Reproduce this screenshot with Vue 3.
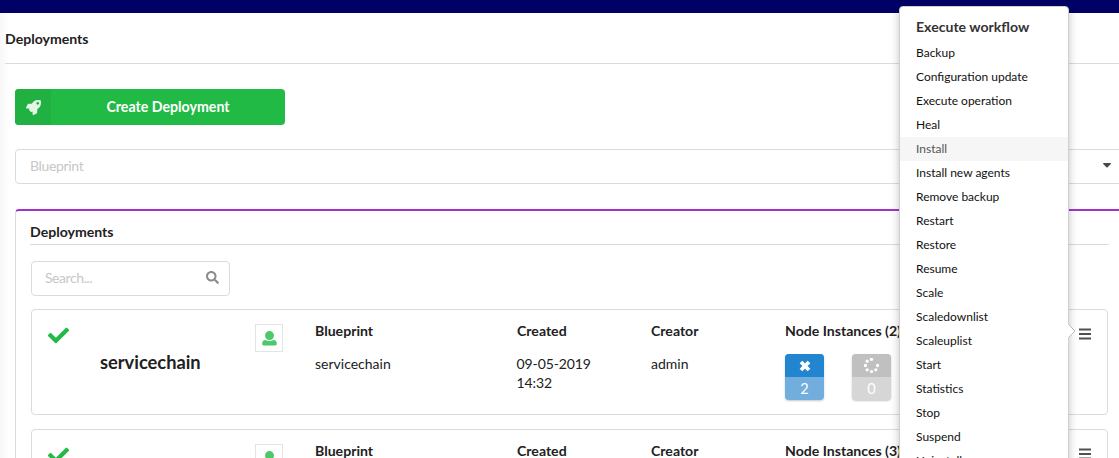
<script setup>
const workflows = [
  'Backup', 'Configuration update', 'Execute operation', 'Heal', 'Install', 'Install new agents',
  'Remove backup', 'Restart', 'Restore', 'Resume', 'Scale', 'Scaledownlist', 'Scaleuplist',
  'Start', 'Statistics', 'Stop', 'Suspend', 'Uninstall',
]
const deployments = [
  { id: 'servicechain', created: '09-05-2019 14:32', creator: 'admin', nodes: 2, counts: true },
  { id: '', created: '', creator: '', nodes: 3, counts: false },
]
const dots = [[256, 48], [256, 464], [464, 256], [48, 256], [109, 403], [403, 403], [109, 109]]
</script>

<template>
  <div class="page">
    <header class="navbar"></header>
    <main class="content">
      <h3 class="page-title">Deployments</h3>
      <button class="create">
        <span class="create-icon">
          <svg viewBox="0 0 512 512" width="15" height="15"><path fill="currentColor" d="M505.1 19.1C503.8 13 499 8.2 492.9 6.9 460.7 0 435.5 0 410.4 0 307.2 0 245.3 55.2 199.1 128H94.9c-18.2 0-34.8 10.3-42.9 26.5L2.6 253.3c-8 16 3.6 34.7 21.5 34.7h95.1c-5.9 12.8-11.9 25.5-18 37.7-3.1 6.2-1.9 13.6 3 18.5l63.6 63.6c4.9 4.9 12.3 6.1 18.5 3 12.2-6.1 24.9-12 37.7-17.9V488c0 17.8 18.8 29.4 34.7 21.5l98.7-49.4c16.3-8.1 26.5-24.8 26.5-42.9V312.8c72.6-46.3 128-108.4 128-211.1.1-25.2.1-50.4-6.8-82.6zM400 160c-26.5 0-48-21.5-48-48s21.5-48 48-48 48 21.5 48 48-21.5 48-48 48z" /></svg>
        </span>
        <span class="create-label">Create Deployment</span>
      </button>
      <div class="select">
        <span>Blueprint</span>
        <svg class="caret" viewBox="0 0 8 5" width="8" height="5"><path d="M.6 0h6.8q.8.2.4.9L4.6 4.2q-.6.5-1.2 0L.2.9Q-.2.2.6 0z" fill="#484848" /></svg>
      </div>
      <section class="segment">
        <h5 class="segment-title">Deployments</h5>
        <div class="search">
          <span>Search...</span>
          <svg viewBox="0 0 512 512" width="13" height="13"><path fill="#8b8b8b" d="M505 442.7L405.3 343c-4.5-4.5-10.6-7-17-7H372c27.6-35.3 44-79.7 44-128C416 93.1 322.9 0 208 0S0 93.1 0 208s93.1 208 208 208c48.3 0 92.7-16.4 128-44v16.3c0 6.4 2.5 12.5 7 17l99.7 99.7c9.4 9.4 24.6 9.4 33.9 0l28.3-28.3c9.4-9.4 9.4-24.6.1-34zM208 336c-70.7 0-128-57.2-128-128 0-70.7 57.2-128 128-128 70.7 0 128 57.2 128 128 0 70.7-57.2 128-128 128z" /></svg>
        </div>
        <article v-for="d in deployments" :key="d.nodes" class="card">
          <div class="identity">
            <div class="marks">
              <svg class="check" viewBox="0 0 512 512" width="21" height="21"><path fill="#21ba45" d="M173.898 439.404l-166.4-166.4c-9.997-9.997-9.997-26.206 0-36.204l36.203-36.204c9.997-9.998 26.207-9.998 36.204 0L192 312.69 432.095 72.596c9.997-9.997 26.207-9.997 36.204 0l36.203 36.204c9.997 9.997 9.997 26.206 0 36.204l-294.4 294.401c-9.998 9.997-26.207 9.997-36.204-.001z" /></svg>
              <span class="owner">
                <svg viewBox="0 0 15 15" width="15" height="15"><circle cx="7.5" cy="4.6" r="4.5" fill="#4dc86a" /><path fill="#4dc86a" d="M3.4 8.9Q7.5 11 11.6 8.9Q14.8 9.3 14.8 12.4V13.1Q14.8 14.4 13.5 14.4H1.5Q.2 14.4 .2 13.1V12.4Q.2 9.3 3.4 8.9z" /></svg>
              </span>
            </div>
            <h3 v-if="d.id" class="name">{{ d.id }}</h3>
          </div>
          <div><h5>Blueprint</h5><p>{{ d.id }}</p></div>
          <div><h5>Created</h5><p class="date">{{ d.created }}</p></div>
          <div><h5>Creator</h5><p>{{ d.creator }}</p></div>
          <div class="instances">
            <h5>Node Instances ({{ d.nodes }})</h5>
            <div v-if="d.counts" class="states">
              <div class="state blue">
                <span class="state-icon">
                  <svg viewBox="0 0 12 12" width="12" height="12"><path d="M2 2l8 8M10 2l-8 8" stroke="#fff" stroke-width="3.8" stroke-linejoin="round" /></svg>
                </span>
                <span class="state-count">{{ d.nodes }}</span>
              </div>
              <div class="state grey">
                <span class="state-icon">
                  <svg viewBox="0 0 512 512" width="15" height="15"><circle v-for="(c, i) in dots" :key="i" :cx="c[0]" :cy="c[1]" r="56" fill="#fff" /></svg>
                </span>
                <span class="state-count">0</span>
              </div>
            </div>
          </div>
          <svg class="bars" viewBox="0 0 12 12" width="12" height="12"><path d="M0 1.5h12M0 6h12M0 10.5h12" stroke="#505050" stroke-width="2" /></svg>
        </article>
      </section>
    </main>
    <div class="popup">
      <h4 class="popup-title">Execute workflow</h4>
      <ul>
        <li v-for="w in workflows" :key="w" :class="{ hovered: w === 'Install' }">{{ w }}</li>
      </ul>
      <svg class="arrow" viewBox="0 0 8 14" width="8" height="14"><path d="M0 0l7 7-7 7z" fill="#fff" /><path d="M.5 .5L7 7 .5 13.5" fill="none" stroke="#bababa" /></svg>
    </div>
  </div>
</template>

<style>
body { margin: 0; overflow: hidden; }
</style>

<style scoped>
* { box-sizing: border-box; }
.page {
  position: relative;
  width: 1119px;
  height: 458px;
  overflow: hidden;
  background: linear-gradient(90deg, #f8f8f8, #fff 10px);
  font-family: Lato, "Open Sans", sans-serif;
  font-size: 14px;
  line-height: 19px;
  color: #212121;
}
h3, h4, h5, p, ul { margin: 0; padding: 0; }
svg { display: block; flex: none; }
.navbar { height: 13px; background: #000066; }
.content { display: flex; flex-direction: column; }
.page-title {
  height: 51px;
  margin-left: 5px;
  padding-top: 16px;
  border-bottom: 1px solid #dbdbdc;
  font-size: 14.1px;
  line-height: 19px;
}
.create {
  display: flex;
  width: 270px;
  height: 36px;
  margin: 25px 0 0 15px;
  padding: 0;
  border: 0;
  border-radius: 4px;
  overflow: hidden;
  background: #21ba45;
  color: #fff;
  font: 700 14.2px/36px Lato, sans-serif;
}
.create-icon {
  display: flex;
  align-items: center;
  justify-content: center;
  width: 36px;
  height: 36px;
  background: #20b142;
  color: #e4f6e8;
}
.create-label { flex: 1; text-align: center; }
.select {
  display: flex;
  align-items: center;
  justify-content: space-between;
  width: 1112px;
  height: 35px;
  margin: 24px 0 0 15px;
  padding: 0 15px 2px 14px;
  border: 1px solid #dbdbdc;
  border-radius: 4px;
  background: #fff;
  color: #c7c7c7;
  letter-spacing: -.35px;
}
.segment {
  width: 1109px;
  height: 300px;
  margin: 25px 0 0 15px;
  padding: 12px 0 0 14px;
  border: 1px solid #dbdbdc;
  border-top: 2px solid #a333c8;
  border-radius: 4px;
  background: #fff;
}
.segment-title {
  width: 1079px;
  height: 22px;
  border-bottom: 1px solid #dbdbdc;
  font-size: 14.1px;
  line-height: 18px;
}
.search {
  display: flex;
  align-items: center;
  justify-content: space-between;
  width: 199px;
  height: 35px;
  margin: 16px 0 0 1px;
  padding: 0 10px 2px 13px;
  border: 1px solid #dbdbdc;
  border-radius: 4px;
  color: #c7c7c7;
  letter-spacing: -.45px;
}
.card {
  position: relative;
  display: grid;
  grid-template-columns: 267px 202px 134px 134px 1fr 12px;
  width: 1077px;
  height: 106px;
  margin: 13px 0 0 1px;
  padding: 12px 16px 0;
  border: 1px solid #dbdbdc;
  border-radius: 4px;
}
.card + .card { margin-top: 14px; }
.card h5 { font-size: 14.1px; line-height: 18px; white-space: nowrap; }
.card p { margin-top: 14px; }
.card .date { width: 90px; margin-left: -.5px; letter-spacing: -.1px; }
.identity { width: 235px; }
.marks { display: flex; justify-content: space-between; }
.check { margin-top: 3px; }
.owner {
  display: flex;
  align-items: center;
  justify-content: center;
  width: 28px;
  height: 28px;
  margin-top: 2px;
  border: 1px solid #e4e4e5;
}
.name {
  margin-left: 52px;
  font-size: 18.3px;
  line-height: 20px;
}
.states { display: flex; gap: 28px; margin-top: 14px; }
.state {
  width: 39px;
  height: 46px;
  border-radius: 4px;
  overflow: hidden;
  box-shadow: 0 1px 2px rgba(34, 36, 38, .25);
  color: #fff;
}
.state-icon { display: flex; align-items: center; justify-content: center; height: 23px; }
.state-count { display: block; height: 23px; text-align: center; font-size: 14.5px; line-height: 24px; }
.blue { background: #71aede; }
.blue .state-icon { background: #2185d0; }
.grey { background: #d6d6d6; }
.grey .state-icon { background: #c0c0c0; }
.bars { margin-top: 6px; }
.popup {
  position: absolute;
  top: 6px;
  left: 899px;
  width: 170px;
  height: 500px;
  padding-top: 10px;
  border: 1px solid #d0d0d1;
  border-radius: 4px;
  background: #fff;
  box-shadow: 0 2px 8px rgba(34, 36, 38, .28);
  color: #111;
}
.popup-title { padding-left: 16px; font-size: 14.1px; line-height: 20px; color: #333; height: 24px; }
.popup ul { list-style: none; }
.popup li { height: 24px; padding-left: 16px; font-size: 12px; line-height: 24px; }
.popup .hovered { background: #f6f6f6; color: #555; }
.arrow { position: absolute; right: -8px; top: 317px; }
</style>
